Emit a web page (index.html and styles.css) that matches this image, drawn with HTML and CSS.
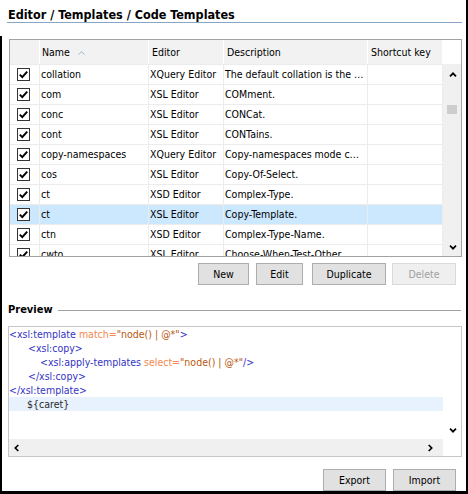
FILE: index.html
```html
<!DOCTYPE html>
<html>
<head>
<meta charset="utf-8">
<title>Code Templates</title>
<link rel="stylesheet" href="styles.css">
</head>
<body>
<div class="frame-left"></div>
<h1 class="title">Editor / Templates / Code Templates</h1>

<div class="table">
  <div class="thead">
    <div class="th"></div>
    <div class="th th-name">Name<svg class="sort" width="7" height="4" viewBox="0 0 7 4"><polyline points="0.5,3.5 3.5,0.8 6.5,3.5" fill="none" stroke="#9db3c9" stroke-width="1"/></svg></div>
    <div class="th">Editor</div>
    <div class="th">Description</div>
    <div class="th">Shortcut key</div>
    <div class="th-corner"></div>
  </div>
  <div class="tbody">
    <div class="rows">
      <div class="row"><div class="td td-chk"><span class="cb"><svg width="11" height="11" viewBox="0 0 11 11"><path d="M1.8 5.6 L4.3 8.1 L9.2 2.6" fill="none" stroke="#000" stroke-width="2"/></svg></span></div><div class="td">collation</div><div class="td">XQuery Editor</div><div class="td">The default collation is the …</div><div class="td"></div></div>
      <div class="row"><div class="td td-chk"><span class="cb"><svg width="11" height="11" viewBox="0 0 11 11"><path d="M1.8 5.6 L4.3 8.1 L9.2 2.6" fill="none" stroke="#000" stroke-width="2"/></svg></span></div><div class="td">com</div><div class="td">XSL Editor</div><div class="td">COMment.</div><div class="td"></div></div>
      <div class="row"><div class="td td-chk"><span class="cb"><svg width="11" height="11" viewBox="0 0 11 11"><path d="M1.8 5.6 L4.3 8.1 L9.2 2.6" fill="none" stroke="#000" stroke-width="2"/></svg></span></div><div class="td">conc</div><div class="td">XSL Editor</div><div class="td">CONCat.</div><div class="td"></div></div>
      <div class="row"><div class="td td-chk"><span class="cb"><svg width="11" height="11" viewBox="0 0 11 11"><path d="M1.8 5.6 L4.3 8.1 L9.2 2.6" fill="none" stroke="#000" stroke-width="2"/></svg></span></div><div class="td">cont</div><div class="td">XSL Editor</div><div class="td">CONTains.</div><div class="td"></div></div>
      <div class="row"><div class="td td-chk"><span class="cb"><svg width="11" height="11" viewBox="0 0 11 11"><path d="M1.8 5.6 L4.3 8.1 L9.2 2.6" fill="none" stroke="#000" stroke-width="2"/></svg></span></div><div class="td">copy-namespaces</div><div class="td">XQuery Editor</div><div class="td">Copy-namespaces mode c…</div><div class="td"></div></div>
      <div class="row"><div class="td td-chk"><span class="cb"><svg width="11" height="11" viewBox="0 0 11 11"><path d="M1.8 5.6 L4.3 8.1 L9.2 2.6" fill="none" stroke="#000" stroke-width="2"/></svg></span></div><div class="td">cos</div><div class="td">XSL Editor</div><div class="td">Copy-Of-Select.</div><div class="td"></div></div>
      <div class="row"><div class="td td-chk"><span class="cb"><svg width="11" height="11" viewBox="0 0 11 11"><path d="M1.8 5.6 L4.3 8.1 L9.2 2.6" fill="none" stroke="#000" stroke-width="2"/></svg></span></div><div class="td">ct</div><div class="td">XSD Editor</div><div class="td">Complex-Type.</div><div class="td"></div></div>
      <div class="row selected"><div class="td td-chk"><span class="cb"><svg width="11" height="11" viewBox="0 0 11 11"><path d="M1.8 5.6 L4.3 8.1 L9.2 2.6" fill="none" stroke="#000" stroke-width="2"/></svg></span></div><div class="td">ct</div><div class="td">XSL Editor</div><div class="td">Copy-Template.</div><div class="td"></div></div>
      <div class="row"><div class="td td-chk"><span class="cb"><svg width="11" height="11" viewBox="0 0 11 11"><path d="M1.8 5.6 L4.3 8.1 L9.2 2.6" fill="none" stroke="#000" stroke-width="2"/></svg></span></div><div class="td">ctn</div><div class="td">XSD Editor</div><div class="td">Complex-Type-Name.</div><div class="td"></div></div>
      <div class="row"><div class="td td-chk"><span class="cb"><svg width="11" height="11" viewBox="0 0 11 11"><path d="M1.8 5.6 L4.3 8.1 L9.2 2.6" fill="none" stroke="#000" stroke-width="2"/></svg></span></div><div class="td">cwto</div><div class="td">XSL Editor</div><div class="td">Choose-When-Test-Other…</div><div class="td"></div></div>
    </div>
    <div class="vscroll">
      <div class="sb-btn"><svg width="8" height="5" viewBox="0 0 8 5"><polyline points="1,4.3 4,1.3 7,4.3" fill="none" stroke="#000" stroke-width="1.7"/></svg></div>
      <div class="sb-track"><div class="sb-thumb"></div></div>
      <div class="sb-btn sb-btn-down"><svg width="8" height="5" viewBox="0 0 8 5"><polyline points="1,0.7 4,3.7 7,0.7" fill="none" stroke="#000" stroke-width="1.7"/></svg></div>
    </div>
  </div>
</div>

<div class="btn-row">
  <button class="btn btn-new">New</button>
  <button class="btn btn-edit">Edit</button>
  <button class="btn btn-dup">Duplicate</button>
  <button class="btn btn-del" disabled>Delete</button>
</div>

<div class="section-head"><span class="section-label">Preview</span><span class="section-line"></span></div>

<div class="editor">
  <div class="code">
    <div class="line"><span class="tg">&lt;xsl:template </span><span class="an">match=</span><span class="av">"node() | @*"</span><span class="tg">&gt;</span></div>
    <div class="line ind1"><span class="tg">&lt;xsl:copy&gt;</span></div>
    <div class="line ind2"><span class="tg">&lt;xsl:apply-templates </span><span class="an">select=</span><span class="av">"node() | @*"</span><span class="tg">/&gt;</span></div>
    <div class="line ind1"><span class="tg">&lt;/xsl:copy&gt;</span></div>
    <div class="line"><span class="tg">&lt;/xsl:template&gt;</span></div>
    <div class="line ind1c current"><span class="var">${caret}</span></div>
  </div>
  <div class="ed-vscroll">
    <svg width="8" height="5" viewBox="0 0 8 5"><polyline points="1,0.7 4,3.7 7,0.7" fill="none" stroke="#000" stroke-width="1.7"/></svg>
  </div>
  <div class="ed-hscroll">
    <svg width="5" height="8" viewBox="0 0 5 8"><polyline points="4.3,1 1.3,4 4.3,7" fill="none" stroke="#000" stroke-width="1.7"/></svg>
    <svg width="5" height="8" viewBox="0 0 5 8"><polyline points="0.7,1 3.7,4 0.7,7" fill="none" stroke="#000" stroke-width="1.7"/></svg>
  </div>
  <div class="ed-corner"></div>
</div>

<div class="btn-row btn-row-bottom">
  <button class="btn btn-exp">Export</button>
  <button class="btn btn-imp">Import</button>
</div>
</body>
</html>
```

FILE: styles.css
```css
html {
  margin: 0;
  padding: 0;
  background: #fff;
}

body {
  margin: 0;
  width: 466px;
  height: 491px;
  border-right: 2px solid #000;
  border-bottom: 3px solid #000;
  position: relative;
  background: #fff;
  color: #000;
  font-family: "DejaVu Sans Condensed", "DejaVu Sans", sans-serif;
  font-stretch: condensed;
  font-size: 10.5px;
  overflow: hidden;
}

.frame-left {
  position: absolute;
  left: 0;
  top: 36px;
  bottom: 0;
  width: 2px;
  background: #000;
}

.title {
  margin: 0 4px 0 7px;
  padding: 7px 0 0 1px;
  height: 15px;
  line-height: 15px;
  font-size: 12.5px;
  font-weight: bold;
  border-bottom: 1px solid #87a5c5;
  white-space: nowrap;
}

/* ---------- table ---------- */
.table {
  margin: 16px 0 0 9px;
  width: 453px;
  height: 218px;
  box-sizing: border-box;
  border: 1px solid #a3a3a3;
  display: flex;
  flex-direction: column;
}

.thead {
  display: grid;
  grid-template-columns: 30px 109px 75px 144px 75px 18px;
  height: 24px;
  flex: none;
}

.th {
  background: #f2f2f2;
  border-right: 1px solid #fff;
  line-height: 24px;
  padding-left: 3px;
  white-space: nowrap;
  overflow: hidden;
}

.th-name {
  padding-left: 2px;
  display: flex;
  align-items: center;
}

.sort {
  margin-left: 8px;
  margin-top: 1px;
}

.th-corner {
  background: #fff;
}

.tbody {
  flex: 1;
  display: flex;
  overflow: hidden;
}

.rows {
  width: 433px;
  overflow: hidden;
}

.row {
  display: grid;
  grid-template-columns: 30px 109px 75px 144px 75px;
  height: 20px;
  box-sizing: border-box;
  border-top: 1px solid #ececec;
}

.row.selected {
  background: #cce8ff;
}

.td {
  border-right: 1px solid #ececec;
  line-height: 19px;
  padding-left: 1px;
  white-space: nowrap;
  overflow: hidden;
}

.td-chk {
  display: flex;
  align-items: center;
  padding-left: 7px;
}

.cb {
  width: 13px;
  height: 13px;
  box-sizing: border-box;
  border: 1px solid #333;
  background: #fff;
  display: flex;
  align-items: center;
  justify-content: center;
}

.cb svg {
  display: block;
}

.vscroll {
  width: 18px;
  background: #f0f0f0;
  display: flex;
  flex-direction: column;
}

.sb-btn {
  height: 20px;
  display: flex;
  align-items: center;
  justify-content: center;
  flex: none;
}

.sb-btn svg {
  display: block;
  margin-left: 1px;
}

.sb-btn-down {
  height: 18px;
}

.sb-track {
  flex: 1;
}

.sb-thumb {
  margin: 21px 0 0 4px;
  width: 10px;
  height: 9px;
  background: #cdcdcd;
}

/* ---------- buttons ---------- */
.btn-row {
  margin-top: 6px;
  height: 22px;
  display: flex;
  justify-content: flex-end;
  padding-right: 10px;
}

.btn {
  height: 22px;
  box-sizing: border-box;
  margin: 0;
  padding: 0;
  border: 1px solid #adadad;
  background: #e1e1e1;
  color: #000;
  font-family: inherit;
  font-stretch: condensed;
  font-size: 10.5px;
  line-height: 20px;
  text-align: center;
}

.btn-new { width: 51px; }
.btn-edit { width: 47px; margin-left: 7px; }
.btn-dup { width: 74px; margin-left: 9px; }
.btn-del {
  width: 64px;
  margin-left: 6px;
  background: #efefef;
  border-color: #dadada;
  color: #a0a0a0;
}

.btn-row-bottom {
  margin-top: 12px;
}

.btn-exp { width: 63px; }
.btn-imp { width: 63px; margin-left: 7px; }

/* ---------- preview ---------- */
.section-head {
  margin: 18px 5px 0 8px;
  height: 14px;
  display: flex;
  align-items: center;
}

.section-label {
  font-weight: bold;
  font-size: 11px;
  line-height: 14px;
}

.section-line {
  flex: 1;
  height: 1px;
  background: #a0a0a0;
  margin-left: 5px;
}

.editor {
  margin: 9px 0 0 8px;
  width: 454px;
  height: 131px;
  box-sizing: border-box;
  border: 1px solid #c6c6c6;
  display: grid;
  grid-template-columns: 434px 18px;
  grid-template-rows: 112px 17px;
}

.code {
  overflow: hidden;
  line-height: 14px;
}

.line {
  height: 14px;
  white-space: pre;
}

.ind1 { padding-left: 19px; }
.ind2 { padding-left: 31px; }
.ind1c { padding-left: 18px; }

.current {
  background: #e8f2fe;
}

.tg { color: #3434c4; }
.an { color: #f3884f; }
.av { color: #b9580f; }
.var { color: #2a2a2a; }

.ed-vscroll {
  background: #fff;
  display: flex;
  align-items: flex-end;
  justify-content: center;
  padding-bottom: 6px;
}

.ed-vscroll svg {
  display: block;
  margin-left: 1px;
}

.ed-hscroll {
  background: #f0f0f0;
  display: flex;
  align-items: center;
  justify-content: space-between;
  padding: 0 10px 0 5px;
}

.ed-hscroll svg {
  display: block;
}

.ed-corner {
  background: #fff;
}
```
